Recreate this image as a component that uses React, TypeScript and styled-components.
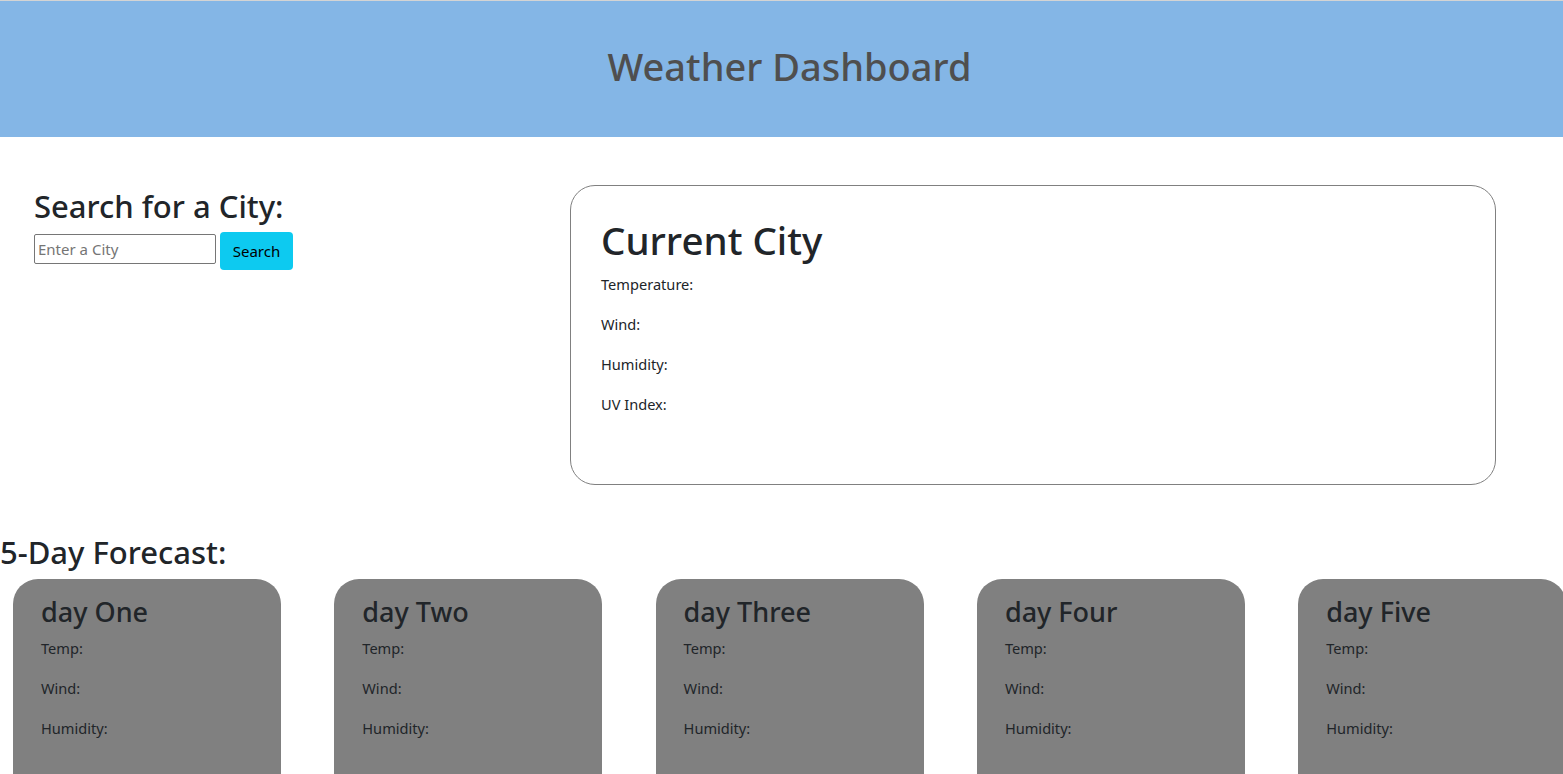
import React from 'react';
import styled, { createGlobalStyle } from 'styled-components';

const GlobalStyle = createGlobalStyle`
  html, body {
    margin: 0;
    padding: 0;
    background: #ffffff;
    overflow-x: hidden;
  }
  body {
    font-family: "Noto Sans", "Open Sans", sans-serif;
    color: #212529;
    font-size: 16px;
    line-height: 1.5;
  }
  * { box-sizing: border-box; }
`;

const days = ['day One', 'day Two', 'day Three', 'day Four', 'day Five'];

const App = () => (
  <>
    <GlobalStyle />
    <Header>
      <Title>Weather Dashboard</Title>
    </Header>
    <TopRow>
      <SearchColumn>
        <SearchHeading>Search for a City:</SearchHeading>
        <SearchForm onSubmit={(e) => e.preventDefault()}>
          <CityInput type="text" placeholder="Enter a City" />
          <SearchButton type="submit">Search</SearchButton>
        </SearchForm>
      </SearchColumn>
      <CurrentCard>
        <CityName>Current City</CityName>
        <Stat>Temperature:</Stat>
        <Stat>Wind:</Stat>
        <Stat>Humidity:</Stat>
        <Stat>UV Index:</Stat>
      </CurrentCard>
    </TopRow>
    <ForecastHeading>5-Day Forecast:</ForecastHeading>
    <ForecastRow>
      {days.map((day) => (
        <DayCard key={day}>
          <DayName>{day}</DayName>
          <Stat>Temp:</Stat>
          <Stat>Wind:</Stat>
          <Stat>Humidity:</Stat>
        </DayCard>
      ))}
    </ForecastRow>
  </>
);

const Header = styled.header`
  height: 137px;
  background: #84b6e6;
  border-top: 1px solid #d4d4d4;
  padding: 0 0 5px 16px;
  display: flex;
  align-items: center;
  justify-content: center;
`;

const Title = styled.h1`
  margin: 0;
  font-size: 38px;
  font-weight: 500;
  color: #4f4f4f;
  line-height: 1.2;
`;

const TopRow = styled.main`
  display: flex;
  padding-top: 48px;
`;

const SearchColumn = styled.section`
  width: 570px;
  padding-left: 34px;
  padding-top: 2px;
`;

const SearchHeading = styled.h2`
  margin: 0 0 7px;
  font-size: 31px;
  font-weight: 500;
  line-height: 38px;
`;

const SearchForm = styled.form`
  display: flex;
  align-items: flex-start;
  gap: 4px;
`;

const CityInput = styled.input`
  width: 182px;
  height: 30px;
  margin-top: 2px;
  border: 1px solid #767676;
  border-radius: 2px;
  padding: 1px 3px;
  font-family: inherit;
  font-size: 15px;
  &::placeholder {
    color: #757575;
  }
`;

const SearchButton = styled.button`
  width: 73px;
  height: 38px;
  border: none;
  border-radius: 4px;
  background: #0dcaf0;
  color: #000000;
  font-family: inherit;
  font-size: 15px;
  cursor: pointer;
`;

const CurrentCard = styled.section`
  width: 926px;
  height: 300px;
  border: 1px solid #808080;
  border-radius: 25px;
  padding: 30px 30px 0;
`;

const CityName = styled.h1`
  margin: 0 0 8px;
  font-size: 38.5px;
  font-weight: 500;
  line-height: 48px;
`;

const Stat = styled.p`
  margin: 0 0 16px;
  font-size: 14.6px;
  line-height: 24px;
`;

const ForecastHeading = styled.h2`
  margin: 48px 0 8px;
  font-size: 31px;
  font-weight: 500;
  line-height: 38px;
`;

const ForecastRow = styled.section`
  display: flex;
  gap: 53.3px;
  padding-left: 13px;
`;

const DayCard = styled.article`
  flex: 0 0 268px;
  min-height: 240px;
  background: #808080;
  border-radius: 25px;
  padding: 17px 28px 20px;
`;

const DayName = styled.h3`
  margin: 0 0 8px;
  font-size: 27px;
  font-weight: 500;
  line-height: 1.2;
`;

export default App;
